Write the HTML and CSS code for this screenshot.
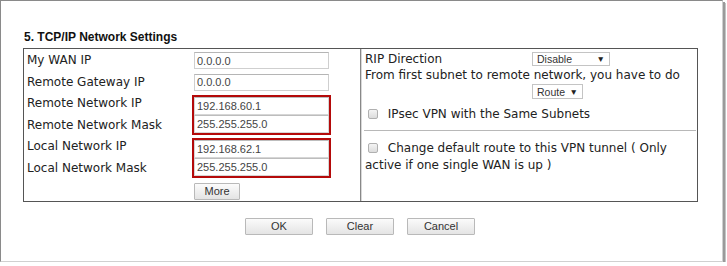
FILE: index.html
```html
<!DOCTYPE html>
<html lang="en">
<head>
  <meta charset="UTF-8">
  <title>TCP/IP Network Settings</title>
  <link rel="stylesheet" href="styles.css">
</head>
<body>

  <div class="frame">
    <div class="title">5. TCP/IP Network Settings</div>

    <div class="box">
      <!-- left: addresses -->
      <div class="cell cell-left">
        <div class="label">My WAN IP</div>
        <input class="field" type="text" value="0.0.0.0">
        <div class="label">Remote Gateway IP</div>
        <input class="field" type="text" value="0.0.0.0">

        <div class="label">Remote Network IP</div>
        <div class="group">
          <input class="field" type="text" value="192.168.60.1">
          <input class="field" type="text" value="255.255.255.0">
        </div>
        <div class="label">Remote Network Mask</div>

        <div class="label">Local Network IP</div>
        <div class="group">
          <input class="field" type="text" value="192.168.62.1">
          <input class="field" type="text" value="255.255.255.0">
        </div>
        <div class="label">Local Network Mask</div>

        <div class="more-wrap"><button class="btn btn-more">More</button></div>
      </div>

      <!-- right: routing options -->
      <div class="cell cell-right">
        <div class="row-rip">
          <span class="rip-label">RIP Direction</span>
          <span class="select select-rip">Disable<span class="arrow">&#9660;</span></span>
        </div>
        <div class="line">From first subnet to remote network, you have to do</div>
        <div class="row-route">
          <span class="select select-route">Route<span class="arrow">&#9660;</span></span>
        </div>
        <label class="check-row">
          <input class="check" type="checkbox"> IPsec VPN with the Same Subnets
        </label>
        <div class="sep"></div>
        <label class="check-para">
          <input class="check" type="checkbox"> Change default route to this VPN tunnel ( Only active if one single WAN is up )
        </label>
      </div>
    </div>

    <div class="actions">
      <button class="btn">OK</button>
      <button class="btn">Clear</button>
      <button class="btn">Cancel</button>
    </div>
  </div>

</body>
</html>
```

FILE: styles.css
```css
body {
  margin: 0;
  background-color: #fff;
  font-family: "DejaVu Sans", Verdana, sans-serif;
  color: #222;
}
.frame {
  width: 721px;
  height: 260px;
  border-left: 1px solid #8a8a8a;
  border-top: 1px solid #8a8a8a;
  border-right: 1px solid #d0d0d0;
  border-bottom: 1px solid #d0d0d0;
  box-shadow: 2px 2px 0 #9a9a9a, 3px 3px 0 #c4c4c4;
  background-color: #fff;
}
.title {
  margin: 29px 0 3px 23px;
  font-family: "Liberation Sans", Arial, sans-serif;
  font-weight: bold;
  font-size: 12px;
  line-height: 15px;
  color: #111;
}
.box {
  display: flex;
  margin-left: 22px;
  width: 673px;
  border: 1px solid #555;
}
.cell-left {
  width: 333px;
  padding: 1px 0 0 3px;
  border-right: 1px solid #888;
  display: grid;
  grid-template-columns: 165px 139px;
  grid-auto-rows: 21.5px;
}
.label {
  grid-column: 1;
  font-size: 12px;
  line-height: 21.5px;
  white-space: nowrap;
}
.field {
  grid-column: 2;
  box-sizing: border-box;
  width: 135px;
  height: 17px;
  margin: 2px 0 0 2px;
  padding: 0 2px;
  border: 1px solid #cfcfcf;
  border-top-color: #b5b5b5;
  font-family: "Liberation Sans", Arial, sans-serif;
  font-size: 11px;
  color: #444;
  background: #fff;
}
.group {
  grid-column: 2;
  grid-row: span 2;
  margin: 1.5px 0;
  width: 135px;
  border: 2px solid #b40a0a;
  display: flex;
  flex-direction: column;
}
.group .field {
  margin: 0;
  height: 18px;
  border-color: #d6d6d6;
  border-top-color: #bdbdbd;
}
.more-wrap {
  grid-column: 2;
  padding: 1px 0 0 2px;
}
.cell-right {
  flex: 1;
  padding: 0 1px 0 3px;
  border-left: 1px solid #d8d8d8;
  font-size: 12px;
}
.row-rip {
  display: flex;
  align-items: center;
  height: 19px;
}
.rip-label {
  width: 167px;
}
.line {
  line-height: 15px;
  white-space: nowrap;
}
.row-route {
  height: 18px;
  padding-left: 167px;
  padding-top: 1px;
}
.select {
  box-sizing: border-box;
  display: inline-flex;
  align-items: center;
  justify-content: space-between;
  height: 15px;
  padding: 0 4px 0 4px;
  border: 1px solid #c4c4c4;
  font-family: "Liberation Sans", Arial, sans-serif;
  font-size: 10.5px;
  color: #333;
  background: #fff;
}
.select-rip {
  width: 78px;
  height: 14px;
}
.select-route {
  width: 51px;
}
.arrow {
  font-size: 8.5px;
  color: #222;
}
.check {
  appearance: none;
  -webkit-appearance: none;
  box-sizing: border-box;
  width: 10px;
  height: 10px;
  margin: 0 6px 0 3px;
  border: 1px solid #b0b0b0;
  border-radius: 2px;
  background: linear-gradient(#f4f4f4, #dcdcdc);
  vertical-align: -1px;
}
.check-row {
  display: block;
  line-height: 20px;
  margin-top: 2px;
}
.sep {
  height: 1px;
  margin: 6px 0 0 -1px;
  background-color: #b8b8b8;
}
.check-para {
  display: block;
  line-height: 17px;
  margin-top: 9px;
  padding-right: 8px;
}
.actions {
  display: flex;
  justify-content: center;
  gap: 13px;
  margin-top: 16px;
  padding-right: 3px;
}
.btn {
  box-sizing: border-box;
  width: 68px;
  height: 17px;
  padding: 0;
  border: 1px solid #b9b9b9;
  border-radius: 1px;
  background: linear-gradient(#fbfbfb, #e4e4e4);
  font-family: "Liberation Sans", Arial, sans-serif;
  font-size: 11px;
  color: #333;
}
.btn-more {
  width: 46px;
  height: 17px;
}
```
